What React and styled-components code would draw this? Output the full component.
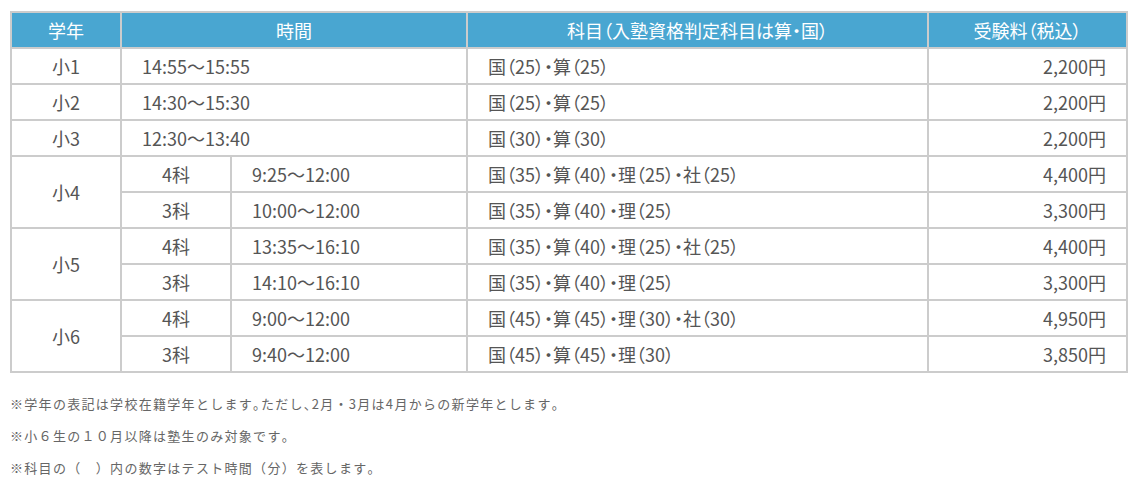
import React from 'react';
import styled, { createGlobalStyle } from 'styled-components';

const GlobalStyle = createGlobalStyle`
  body {
    margin: 0;
    background: #ffffff;
    font-family: "Noto Sans CJK JP", "Noto Sans", sans-serif;
    color: #555555;
  }
`;

const singleRows = [
  { grade: '小1', time: '14:55〜15:55', subjects: '国（25）・算（25）', fee: '2,200円' },
  { grade: '小2', time: '14:30〜15:30', subjects: '国（25）・算（25）', fee: '2,200円' },
  { grade: '小3', time: '12:30〜13:40', subjects: '国（30）・算（30）', fee: '2,200円' },
];

const groupRows = [
  {
    grade: '小4',
    courses: [
      { kind: '4科', time: '9:25〜12:00', subjects: '国（35）・算（40）・理（25）・社（25）', fee: '4,400円' },
      { kind: '3科', time: '10:00〜12:00', subjects: '国（35）・算（40）・理（25）', fee: '3,300円' },
    ],
  },
  {
    grade: '小5',
    courses: [
      { kind: '4科', time: '13:35〜16:10', subjects: '国（35）・算（40）・理（25）・社（25）', fee: '4,400円' },
      { kind: '3科', time: '14:10〜16:10', subjects: '国（35）・算（40）・理（25）', fee: '3,300円' },
    ],
  },
  {
    grade: '小6',
    courses: [
      { kind: '4科', time: '9:00〜12:00', subjects: '国（45）・算（45）・理（30）・社（30）', fee: '4,950円' },
      { kind: '3科', time: '9:40〜12:00', subjects: '国（45）・算（45）・理（30）', fee: '3,850円' },
    ],
  },
];

const notes = [
  '※学年の表記は学校在籍学年とします。ただし、2月・3月は4月からの新学年とします。',
  '※小６生の１０月以降は塾生のみ対象です。',
  '※科目の（　）内の数字はテスト時間（分）を表します。',
];

// 。 and 、 in the notes are set half-width
const renderNote = text =>
  text.split(/([。、])/).map((part, i) =>
    /^[。、]$/.test(part) ? <Punct key={i}>{part}</Punct> : part
  );

const App = () => {
  return (
    <Page>
      <GlobalStyle />
      <Schedule>
        <colgroup>
          <col style={{ width: 110 }} />
          <col style={{ width: 110 }} />
          <col style={{ width: 236 }} />
          <col style={{ width: 461 }} />
          <col style={{ width: 199 }} />
        </colgroup>
        <thead>
          <tr>
            <HeadCell>学年</HeadCell>
            <HeadCell colSpan={2}>時間</HeadCell>
            <HeadCell>科目（入塾資格判定科目は算・国）</HeadCell>
            <HeadCell>受験料（税込）</HeadCell>
          </tr>
        </thead>
        <tbody>
          {singleRows.map(row => (
            <tr key={row.grade}>
              <Cell $align="center">{row.grade}</Cell>
              <Cell colSpan={2}>{row.time}</Cell>
              <Cell>{row.subjects}</Cell>
              <Cell $align="right">{row.fee}</Cell>
            </tr>
          ))}
          {groupRows.map(group =>
            group.courses.map((course, i) => (
              <tr key={group.grade + course.kind}>
                {i === 0 && (
                  <Cell $align="center" rowSpan={group.courses.length}>
                    {group.grade}
                  </Cell>
                )}
                <Cell $align="center">{course.kind}</Cell>
                <Cell>{course.time}</Cell>
                <Cell>{course.subjects}</Cell>
                <Cell $align="right">{course.fee}</Cell>
              </tr>
            ))
          )}
        </tbody>
      </Schedule>
      <Notes>
        {notes.map(note => (
          <Note key={note}>{renderNote(note)}</Note>
        ))}
      </Notes>
    </Page>
  );
};

const Page = styled.div`
  padding: 11px 12px 0 10px;
`;

const Schedule = styled.table`
  width: 1118px;
  table-layout: fixed;
  border-collapse: collapse;
  border: 2px solid #cccccc;
`;

const HeadCell = styled.th`
  height: 34px;
  padding: 0 20px;
  background-color: #49a6d1;
  color: #ffffff;
  font-size: 18px;
  line-height: 24px;
  font-weight: 400;
  text-align: center;
  border: 2px solid #cccccc;
  font-feature-settings: "palt";
`;

const Cell = styled.td`
  height: 34px;
  padding: 0 20px;
  font-size: 18px;
  line-height: 24px;
  text-align: ${props => props.$align || 'left'};
  border: 2px solid #cccccc;
  font-feature-settings: "palt";
`;

const Notes = styled.div`
  display: flex;
  flex-direction: column;
  gap: 8px;
  margin-top: 19px;
`;

const Note = styled.p`
  margin: 0;
  font-size: 13px;
  line-height: 24px;
  letter-spacing: 0.1em;
  color: #666666;
`;

const Punct = styled.span`
  font-feature-settings: "halt";
`;

export default App;
